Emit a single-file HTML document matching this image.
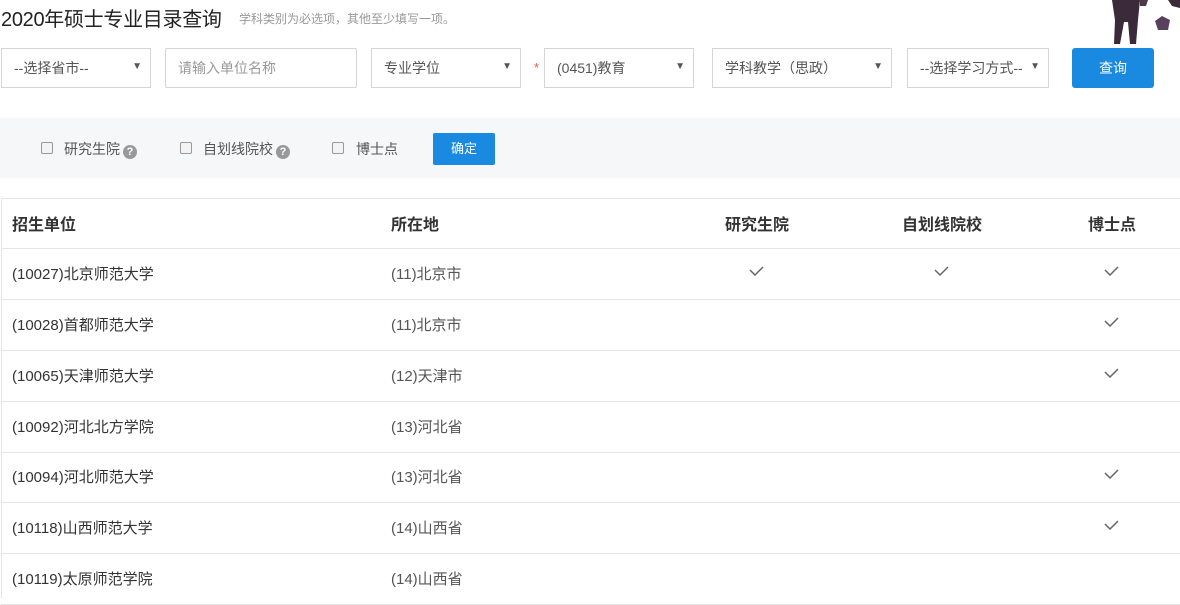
<!DOCTYPE html>
<html><head><meta charset="utf-8"><style>
*{margin:0;padding:0;box-sizing:border-box}
body{width:1180px;height:596px;overflow:hidden;background:#fff;font-family:"Liberation Sans","Noto Sans CJK SC",sans-serif;color:#333;position:relative}
.a{position:absolute}
.sel{position:absolute;top:48px;height:40px;border:1px solid #d5d5d5;background:#fff;font-size:14px;color:#555;line-height:38px;padding-left:12px}
.sel .ar{position:absolute;right:8px;top:-1px;font-size:10px;color:#555}
.cb{position:absolute;top:142px;width:12px;height:12px;border:1px solid #999;border-radius:2px;background:#f3f3f3}
.lb{position:absolute;top:140px;font-size:14px;color:#555;line-height:18px}
.q{display:inline-block;width:14px;height:14px;border-radius:7px;background:#999;color:#fff;font-size:11px;font-weight:bold;text-align:center;line-height:14px;vertical-align:-1px;margin-left:3px}
.row{position:absolute;left:1px;width:1179px;height:51px;border-bottom:1px solid #e6e6e6;font-size:15px;color:#333}
.row span{position:absolute;top:14px}
.ck{position:absolute;top:17px;width:15px;height:10px}
.h{font-weight:bold;font-size:16px}
</style></head><body>
<div class="a" style="left:1px;top:3px;font-size:20px;color:#222;letter-spacing:-0.3px">2020年硕士专业目录查询</div>
<div class="a" style="left:239px;top:10px;font-size:12px;color:#999">学科类别为必选项，其他至少填写一项。</div>
<svg class="a" style="left:1100px;top:0" width="80" height="46" viewBox="0 0 80 46">
<path d="M12 0 L40 0 L38 20 L36 44 L30 44 L28 22 L24 22 L20 44 L14 44 L15 20 Z" fill="#3a2a3a"/>
<path d="M40 0 L48 0 L46 6 L40 6Z" fill="#4a3a4a"/>
<path d="M62 16 L70 20 L68 30 L58 30 L55 21 Z" fill="#5a3f5e"/>
<path d="M68 0 L80 0 L80 8 L72 6Z" fill="#3a2a3a"/>
</svg>
<div class="sel" style="left:1px;width:150px">--选择省市--<span class="ar">▼</span></div>
<div class="sel" style="left:165px;width:192px;color:#999;border-radius:2px">请输入单位名称</div>
<div class="sel" style="left:371px;width:150px">专业学位<span class="ar">▼</span></div>
<div class="a" style="left:534px;top:60px;color:#e55;font-size:13px">*</div>
<div class="sel" style="left:544px;width:150px">(0451)教育<span class="ar">▼</span></div>
<div class="sel" style="left:712px;width:180px">学科教学（思政）<span class="ar">▼</span></div>
<div class="sel" style="left:907px;width:142px">--选择学习方式--<span class="ar">▼</span></div>
<div class="a" style="left:1072px;top:48px;width:82px;height:40px;background:#1a89e0;border-radius:3px;color:#fff;font-size:14px;text-align:center;line-height:40px">查询</div>
<div class="a" style="left:0;top:118px;width:1180px;height:60px;background:#f6f7f9"></div>
<div class="cb" style="left:41px"></div><div class="lb" style="left:64px">研究生院<span class="q">?</span></div>
<div class="cb" style="left:180px"></div><div class="lb" style="left:203px">自划线院校<span class="q">?</span></div>
<div class="cb" style="left:332px"></div><div class="lb" style="left:356px">博士点</div>
<div class="a" style="left:433px;top:133px;width:62px;height:32px;background:#1a89e0;border-radius:2px;color:#fff;font-size:13px;text-align:center;line-height:32px">确定</div>
<div class="a" style="left:1px;top:198px;width:1179px;height:400px;border-left:1px solid #e6e6e6;border-top:1px solid #e6e6e6"></div>
<div class="row h" style="top:198px;height:51px"><span style="left:11px;top:13px">招生单位</span><span style="left:390px;top:13px">所在地</span><span style="left:724px;top:13px">研究生院</span><span style="left:901px;top:13px">自划线院校</span><span style="left:1087px;top:13px">博士点</span></div>
<div class="row" style="top:249px"><span style="left:11px">(10027)北京师范大学</span><span style="left:390px;color:#555">(11)北京市</span>
<svg class="ck" style="left:748px" viewBox="0 0 15 10"><path d="M1 4 L6 9 L14 1" stroke="#666" stroke-width="1.5" fill="none"/></svg>
<svg class="ck" style="left:933px" viewBox="0 0 15 10"><path d="M1 4 L6 9 L14 1" stroke="#666" stroke-width="1.5" fill="none"/></svg>
<svg class="ck" style="left:1103px" viewBox="0 0 15 10"><path d="M1 4 L6 9 L14 1" stroke="#666" stroke-width="1.5" fill="none"/></svg></div>
<div class="row" style="top:300px"><span style="left:11px">(10028)首都师范大学</span><span style="left:390px;color:#555">(11)北京市</span>
<svg class="ck" style="left:1103px" viewBox="0 0 15 10"><path d="M1 4 L6 9 L14 1" stroke="#666" stroke-width="1.5" fill="none"/></svg></div>
<div class="row" style="top:351px"><span style="left:11px">(10065)天津师范大学</span><span style="left:390px;color:#555">(12)天津市</span>
<svg class="ck" style="left:1103px" viewBox="0 0 15 10"><path d="M1 4 L6 9 L14 1" stroke="#666" stroke-width="1.5" fill="none"/></svg></div>
<div class="row" style="top:402px"><span style="left:11px">(10092)河北北方学院</span><span style="left:390px;color:#555">(13)河北省</span></div>
<div class="row" style="top:452px"><span style="left:11px">(10094)河北师范大学</span><span style="left:390px;color:#555">(13)河北省</span>
<svg class="ck" style="left:1103px" viewBox="0 0 15 10"><path d="M1 4 L6 9 L14 1" stroke="#666" stroke-width="1.5" fill="none"/></svg></div>
<div class="row" style="top:503px"><span style="left:11px">(10118)山西师范大学</span><span style="left:390px;color:#555">(14)山西省</span>
<svg class="ck" style="left:1103px" viewBox="0 0 15 10"><path d="M1 4 L6 9 L14 1" stroke="#666" stroke-width="1.5" fill="none"/></svg></div>
<div class="row" style="top:554px"><span style="left:11px">(10119)太原师范学院</span><span style="left:390px;color:#555">(14)山西省</span></div>
</body></html>
